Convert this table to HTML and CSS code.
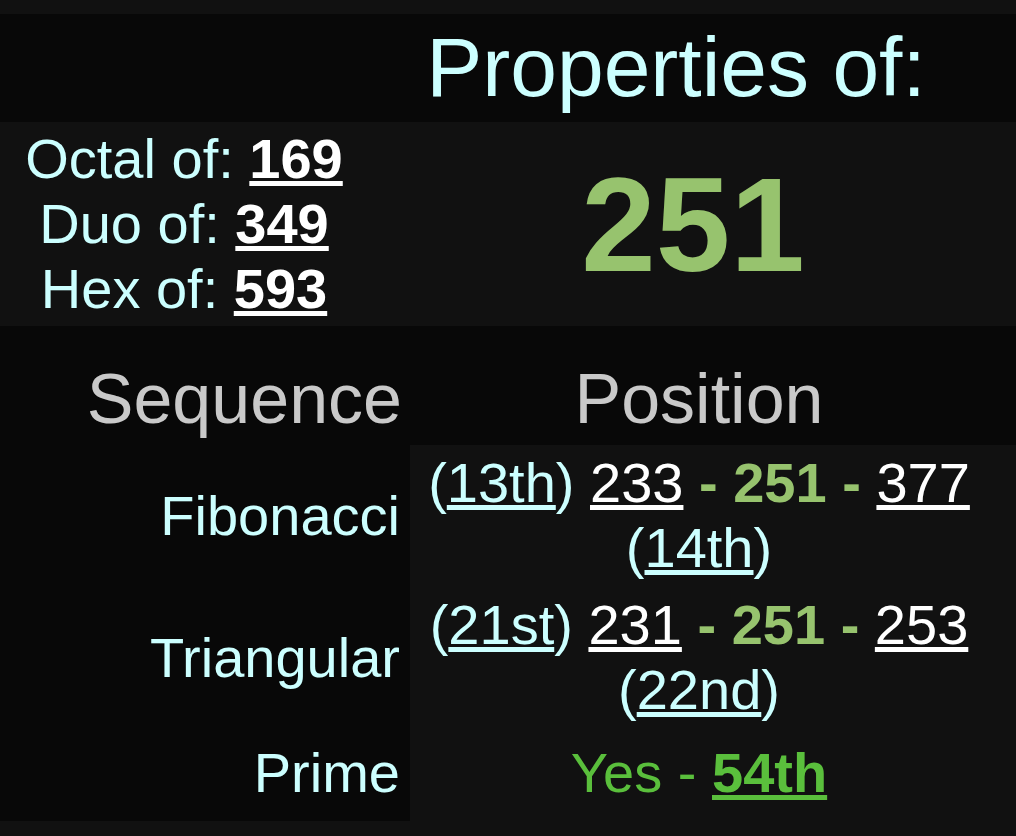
FILE: index.html
```html
<!DOCTYPE html>
<html lang="en">
<head>
<meta charset="utf-8">
<title>Properties of 251</title>
<link rel="stylesheet" href="styles.css">
</head>
<body>
<section class="props">
  <div class="cell head-empty"></div>
  <h1 class="cell head-title">Properties of:</h1>
  <div class="cell bases">
    <div class="base">Octal of: <a class="base-num" href="#">169</a></div>
    <div class="base">Duo of: <a class="base-num" href="#">349</a></div>
    <div class="base">Hex of: <a class="base-num" href="#">593</a></div>
  </div>
  <div class="cell big-num">251</div>
</section>
<section class="seq">
  <div class="cell seq-head seq-head-label">Sequence</div>
  <div class="cell seq-head seq-head-pos">Position</div>

  <div class="cell seq-label row-a">Fibonacci</div>
  <div class="cell seq-val row-a">(<a class="ord" href="#">13th</a>) <a class="num" href="#">233</a> <span class="hit">- 251 -</span> <a class="num" href="#">377</a> (<a class="ord" href="#">14th</a>)</div>

  <div class="cell seq-label row-b">Triangular</div>
  <div class="cell seq-val row-b">(<a class="ord" href="#">21st</a>) <a class="num" href="#">231</a> <span class="hit">- 251 -</span> <a class="num" href="#">253</a> (<a class="ord" href="#">22nd</a>)</div>

  <div class="cell seq-label row-c">Prime</div>
  <div class="cell seq-val row-c"><span class="yes">Yes - <a class="yes-ord" href="#">54th</a></span></div>
</section>
</body>
</html>
```
FILE: styles.css
```css
html, body {
  margin: 0;
  background: #111111;
}
body {
  padding: 14px 0;
  font-family: "Liberation Sans", Arial, Helvetica, sans-serif;
  color: #ccffff;
}
a {
  text-decoration: underline;
}

/* top block */
.props {
  display: grid;
  grid-template-columns: 368px 1fr;
}
.head-empty,
.head-title {
  background: #080808;
}
.head-title {
  margin: 0;
  padding: 5px 32px 6px 0;
  font-size: 84px;
  font-weight: normal;
  line-height: normal;
  text-align: center;
  color: #ccffff;
}
.bases {
  background: #111111;
  padding: 4px 0 5px;
  text-align: center;
  font-size: 56px;
  line-height: normal;
}
.base-num {
  color: #ffffff;
  font-weight: bold;
}
.big-num {
  background: #111111;
  padding-left: 2px;
  display: flex;
  align-items: center;
  justify-content: center;
  font-size: 134px;
  font-weight: bold;
  color: #97c36e;
}

/* sequence table */
.seq {
  display: grid;
  grid-template-columns: 410px 1fr;
  font-size: 56px;
  line-height: normal;
}
.seq-head {
  background: #080808;
  font-size: 70px;
  color: #c9c9c9;
  padding: 33px 0 6px;
}
.seq-head-label {
  text-align: right;
  padding-right: 8px;
}
.seq-head-pos {
  text-align: center;
  padding-right: 28px;
}
.seq-label {
  background: #080808;
  text-align: right;
  padding-right: 10px;
  display: flex;
  align-items: center;
  justify-content: flex-end;
  color: #ccffff;
}
.seq-val {
  background: #111111;
  text-align: center;
  padding-right: 28px;
  color: #ccffff;
}
.row-a { padding-top: 5px; padding-bottom: 6px; }
.row-b { padding-top: 6px; padding-bottom: 9px; }
.row-c { padding-top: 9px; padding-bottom: 16px; }

.ord {
  color: #ccffff;
}
.num {
  color: #ffffff;
}
.hit {
  color: #97c36e;
  font-weight: bold;
}
.yes {
  color: #5abf3c;
}
.yes-ord {
  color: #5abf3c;
  font-weight: bold;
}
```
